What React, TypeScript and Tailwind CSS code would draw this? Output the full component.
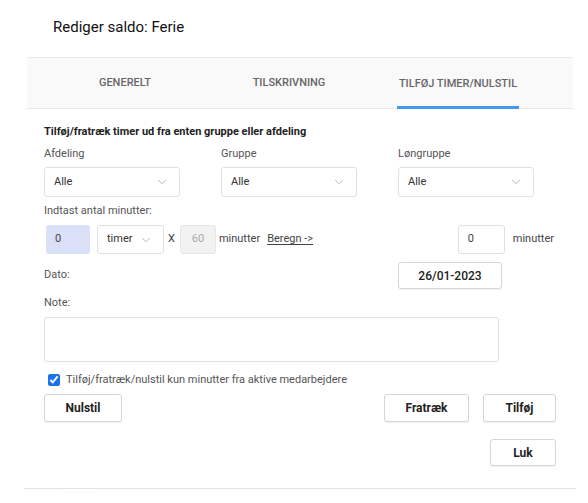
import { ChevronDown } from "lucide-react";

const selects = [
  { label: "Afdeling", value: "Alle" },
  { label: "Gruppe", value: "Alle" },
  { label: "Løngruppe", value: "Alle" },
];

function Select({ value, className }: { value: string; className: string }) {
  return (
    <div
      className={`flex items-center justify-between rounded-[3px] border border-[#e0e0e0] bg-white pl-[9px] pr-[10px] text-[11px] text-[#333] ${className}`}
    >
      <span>{value}</span>
      <ChevronDown className="h-[14px] w-[14px] text-[#a8a8a8]" strokeWidth={1.4} />
    </div>
  );
}

function Button({ label, className }: { label: string; className: string }) {
  return (
    <button
      className={`flex items-center justify-center rounded-[3px] border border-[#d6d6d6] bg-white text-[12px] font-bold text-[#222] shadow-[0_1px_1px_rgba(0,0,0,0.06)] ${className}`}
    >
      {label}
    </button>
  );
}

export default function App() {
  return (
    <div className="h-[503px] w-[588px] overflow-hidden bg-white font-['Roboto',sans-serif] text-[#444]">
      <div className="h-[57px] pl-[53px] pt-[16px] text-[15px] text-[#111]">Rediger saldo: Ferie</div>

      <div className="ml-[27px] w-[546px]">
        {/* tabs */}
        <div className="flex h-[52px] border-y border-[#e8e8e8] bg-[#f9f9f9] pl-[15px] text-[11px] font-medium uppercase text-[#666]">
          <div className="flex w-[166px] items-end justify-center">
            <span className="pb-[17px]">Generelt</span>
          </div>
          <div className="flex w-[162px] items-end justify-center">
            <span className="pb-[17px]">Tilskrivning</span>
          </div>
          <div className="flex w-[176px] items-end justify-center">
            <span className="-mb-px border-b-[3px] border-[#4299ee] px-[2px] pb-[14px]">Tilføj timer/nulstil</span>
          </div>
        </div>

        <div className="pl-[17px] pt-[16px] text-[11px]">
          <div className="h-[14px] leading-[14px] font-bold text-[#222]">
            Tilføj/fratræk timer ud fra enten gruppe eller afdeling
          </div>

          <div className="mt-[8px] flex gap-[41px]">
            {selects.map((s) => (
              <div key={s.label} className="w-[136px]">
                <div className="h-[14px] leading-[14px] text-[#555]">{s.label}</div>
                <Select value={s.value} className="mt-[6px] h-[30px] w-[136px]" />
              </div>
            ))}
          </div>

          <div className="mt-[7px] h-[14px] leading-[14px] text-[#555]">Indtast antal minutter:</div>

          <div className="mt-[7px] flex h-[29px] w-[510px] items-center">
            <div className="ml-[2px] flex h-[29px] w-[44px] items-center rounded-[3px] bg-[#d9e0f7] pl-[9px] text-[#444]">0</div>
            <Select value="timer" className="ml-[7px] h-[29px] w-[67px]" />
            <span className="ml-[4px] text-[#444]">X</span>
            <div className="ml-[5px] flex h-[29px] w-[36px] items-center justify-center rounded-[3px] border border-[#e6e6e6] bg-[#f2f2f2] text-[#aaa]">60</div>
            <span className="ml-[3px] text-[#444]">minutter</span>
            <span className="ml-[7px] text-[#444] underline underline-offset-2">Beregn -&gt;</span>
            <div className="ml-auto flex h-[29px] w-[47px] items-center rounded-[3px] border border-[#e0e0e0] pl-[9px] text-[#444]">0</div>
            <span className="ml-[8px] text-[#444]">minutter</span>
          </div>

          <div className="mt-[8px] flex h-[27px] w-[458px] items-center justify-between">
            <span className="text-[#555]">Dato:</span>
            <div className="flex h-[27px] w-[104px] items-center justify-center rounded-[3px] border border-[#d6d6d6] text-[12px] font-medium text-[#222] shadow-[0_1px_1px_rgba(0,0,0,0.06)]">
              26/01-2023
            </div>
          </div>

          <div className="mt-[7px] h-[14px] leading-[14px] text-[#555]">Note:</div>
          <div className="mt-[7px] h-[45px] w-[455px] rounded-[3px] border border-[#e0e0e0]" />

          <label className="mt-[12px] flex h-[12px] items-center gap-[6px] pl-[4px] text-[#555]">
            <input type="checkbox" defaultChecked className="h-[12px] w-[12px] accent-[#1a73e8]" />
            <span>Tilføj/fratræk/nulstil kun minutter fra aktive medarbejdere</span>
          </label>

          <div className="mt-[8px] flex h-[28px] w-[512px]">
            <Button label="Nulstil" className="h-[28px] w-[78px]" />
            <Button label="Fratræk" className="ml-auto h-[28px] w-[85px]" />
            <Button label="Tilføj" className="ml-[14px] h-[28px] w-[73px]" />
          </div>

          <div className="mt-[17px] flex w-[512px] justify-end">
            <Button label="Luk" className="h-[27px] w-[66px]" />
          </div>
        </div>
      </div>

      <div className="ml-[24px] mt-[22px] w-[552px] border-t border-[#e2e2e2]">
        <div className="ml-[38px] mt-[-1px] text-[6px] leading-[6px] tracking-[2px] text-[#c8c8c8]">..........</div>
      </div>
    </div>
  );
}
